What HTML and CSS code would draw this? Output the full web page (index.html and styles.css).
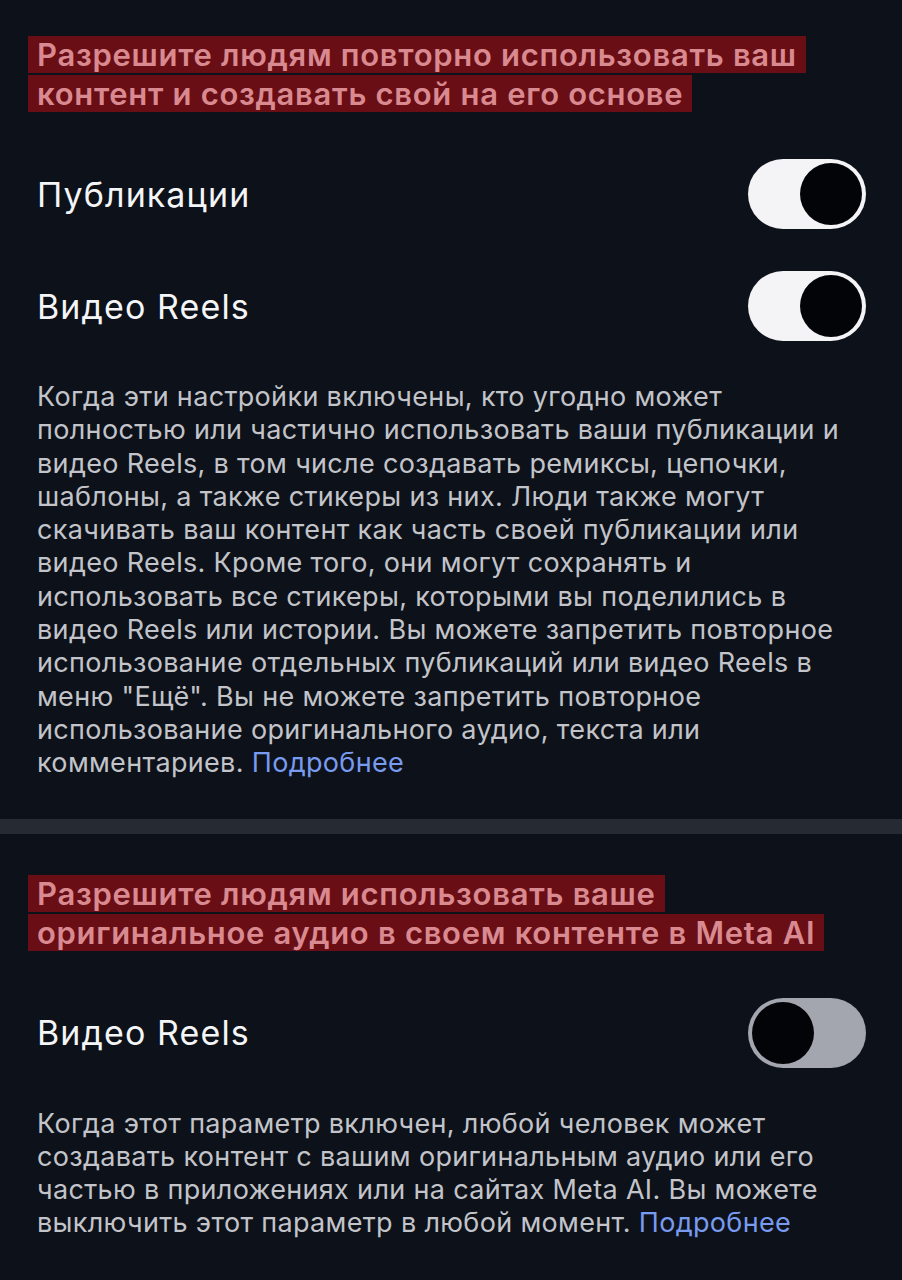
FILE: index.html
```html
<!DOCTYPE html>
<html lang="ru">
<head>
<meta charset="utf-8">
<title>Повторное использование контента</title>
<link rel="stylesheet" href="styles.css">
</head>
<body>
  <section class="section">
    <h2 class="heading"><span class="mark">Разрешите людям повторно использовать ваш контент и создавать свой на его основе</span></h2>
    <div class="row">
      <span class="label">Публикации</span>
      <span class="toggle on" role="switch" aria-checked="true"><span class="knob"></span></span>
    </div>
    <div class="row">
      <span class="label">Видео Reels</span>
      <span class="toggle on" role="switch" aria-checked="true"><span class="knob"></span></span>
    </div>
    <p class="note">Когда эти настройки включены, кто угодно может полностью или частично использовать ваши публикации и видео Reels, в том числе создавать ремиксы, цепочки, шаблоны, а также стикеры из них. Люди также могут скачивать ваш контент как часть своей публикации или видео Reels. Кроме того, они могут сохранять и использовать все стикеры, которыми вы поделились в видео Reels или истории. Вы можете запретить повторное использование отдельных публикаций или видео Reels в меню "Ещё". Вы не можете запретить повторное использование оригинального аудио, текста или комментариев. <a class="more" href="#">Подробнее</a></p>
  </section>

  <div class="divider"></div>

  <section class="section">
    <h2 class="heading"><span class="mark">Разрешите людям использовать ваше оригинальное аудио в своем контенте в Meta AI</span></h2>
    <div class="row">
      <span class="label">Видео Reels</span>
      <span class="toggle off" role="switch" aria-checked="false"><span class="knob"></span></span>
    </div>
    <p class="note">Когда этот параметр включен, любой человек может создавать контент с вашим оригинальным аудио или его частью в приложениях или на сайтах Meta AI. Вы можете выключить этот параметр в любой момент. <a class="more" href="#">Подробнее</a></p>
  </section>
</body>
</html>
```
FILE: styles.css
```css
html, body {
  margin: 0;
  padding: 0;
  background: #0d1119;
}

body {
  font-family: Inter, "Noto Sans", "DejaVu Sans", sans-serif;
  color: #f2f3f5;
  min-height: 1280px;
}

.section {
  padding: 35px 36px 0 37px;
}

.section + .divider {
  margin-top: 39px;
}

.divider + .section {
  padding-top: 40px;
}

.heading {
  margin: 0 0 0 -9px;
  font-size: 31px;
  font-weight: 600;
  line-height: 39px;
  letter-spacing: 0.7px;
  max-width: 820px;
}

.mark {
  background: #6a0e16;
  color: #d98a90;
  padding: 0 9px;
  -webkit-box-decoration-break: clone;
  box-decoration-break: clone;
}

.row {
  display: flex;
  align-items: center;
  justify-content: space-between;
  height: 112px;
}

.heading + .row {
  margin-top: 25px;
}

.label {
  font-size: 34px;
  font-weight: 400;
  letter-spacing: 1.1px;
  color: #f4f5f7;
}

.toggle {
  display: flex;
  align-items: center;
  width: 118px;
  height: 70px;
  border-radius: 35px;
  box-sizing: border-box;
  padding: 0 4px;
}

.toggle.on {
  background: #f4f4f6;
  justify-content: flex-end;
}

.toggle.off {
  background: #a3a6ae;
  justify-content: flex-start;
}

.knob {
  width: 62px;
  height: 62px;
  border-radius: 50%;
  background: #030407;
}

.note {
  margin: 18px 0 0 0;
  font-size: 27px;
  line-height: 33.3px;
  letter-spacing: 0.33px;
  color: #c2c4ca;
}

.more {
  color: #789bf0;
  text-decoration: none;
}

.divider {
  height: 15px;
  background: #252a33;
}
```
